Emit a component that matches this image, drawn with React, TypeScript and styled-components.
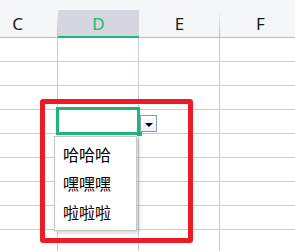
import styled, { createGlobalStyle } from "styled-components";

const GlobalStyle = createGlobalStyle`
  html, body { margin: 0; padding: 0; background: #fff; }
  body { font-family: "Noto Sans", "Noto Sans CJK SC", sans-serif; }
`;

const COLS = ["C", "D", "E", "F"];
const ROWS = 9;
const OPTIONS = ["哈哈哈", "嘿嘿嘿", "啦啦啦"];

const Sheet = styled.div`
  position: relative;
  width: 295px;
  height: 251px;
  overflow: hidden;
  background: #fff;
`;

const TopStrip = styled.div`
  height: 10px;
  background: #f5f6f8;
`;

const Grid = styled.div`
  margin-left: -23px;
  display: grid;
  grid-template-columns: repeat(4, 81px);
`;

const HeadCell = styled.div<{ $active?: boolean }>`
  box-sizing: border-box;
  height: 28px;
  display: flex;
  align-items: center;
  justify-content: center;
  font-size: 17px;
  color: ${(p) => (p.$active ? "#21b573" : "#1a1a1a")};
  background: ${(p) =>
    p.$active
      ? "#d4d7df"
      : "linear-gradient(to bottom, #f5f6f8, #b4b9c4) right / 1px 100% no-repeat, #f5f6f8"};
  border-bottom: ${(p) => (p.$active ? "2px solid #21b573" : "1px solid #b9bdc7")};
  padding-top: ${(p) => (p.$active ? "1px" : "0")};
`;

const Cell = styled.div`
  box-sizing: border-box;
  height: 24px;
  border-right: 1px solid #c8ccd6;
  border-bottom: 1px solid #c8ccd6;
`;

const Selection = styled.div`
  position: absolute;
  left: 56px;
  top: 107px;
  width: 84px;
  height: 28px;
  box-sizing: border-box;
  border: 3px solid #20b576;
`;

const FillHandle = styled.div`
  position: absolute;
  left: 137px;
  top: 131px;
  width: 5px;
  height: 5px;
  background: #20b576;
`;

const DropButton = styled.div`
  position: absolute;
  left: 140px;
  top: 115px;
  width: 17px;
  height: 17px;
  box-sizing: border-box;
  border: 1px solid #8d9db4;
  background: linear-gradient(#ffffff, #eef0f3);
  display: flex;
  align-items: center;
  justify-content: center;
`;

const Caret = styled.span`
  width: 0;
  height: 0;
  margin-top: 2px;
  border-left: 4px solid transparent;
  border-right: 4px solid transparent;
  border-top: 4px solid #000;
`;

const List = styled.ul`
  position: absolute;
  left: 54px;
  top: 136px;
  width: 83px;
  box-sizing: border-box;
  margin: 0;
  padding: 3px 0;
  list-style: none;
  background: #fff;
  border: 1px solid #c8c8c8;
  box-shadow: 2px 2px 4px rgba(0, 0, 0, 0.18);
`;

const Item = styled.li`
  height: 29px;
  line-height: 29px;
  padding-left: 8px;
  font-family: "Noto Sans CJK SC", sans-serif;
  font-size: 16px;
  color: #000;
`;

const Highlight = styled.div`
  position: absolute;
  left: 40px;
  top: 99px;
  width: 153px;
  height: 144px;
  box-sizing: border-box;
  border: 5px solid #ed1c24;
  border-radius: 3px;
  pointer-events: none;
`;

export default function App() {
  return (
    <Sheet>
      <GlobalStyle />
      <TopStrip />
      <Grid>
        {COLS.map((c) => (
          <HeadCell key={c} $active={c === "D"}>
            {c}
          </HeadCell>
        ))}
        {Array.from({ length: ROWS * COLS.length }).map((_, i) => (
          <Cell key={i} />
        ))}
      </Grid>
      <Selection />
      <FillHandle />
      <DropButton>
        <Caret />
      </DropButton>
      <List>
        {OPTIONS.map((o) => (
          <Item key={o}>{o}</Item>
        ))}
      </List>
      <Highlight />
    </Sheet>
  );
}
